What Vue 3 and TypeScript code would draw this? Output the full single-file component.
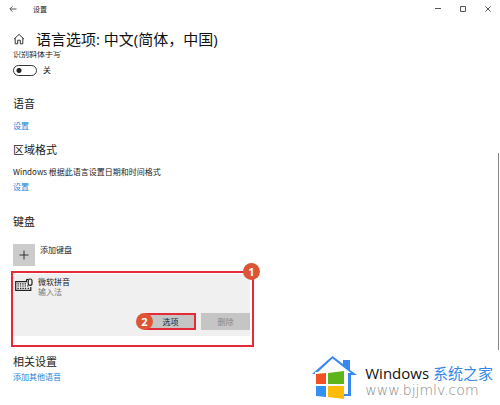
<script setup lang="ts">
import { ref } from 'vue'

const handwriting = ref(false)
const title: string = '语言选项: 中文(简体，中国)'
</script>

<template>
  <div class="window">
    <header class="titlebar">
      <button class="bar-btn back" aria-label="返回">
        <svg width="8" height="8" viewBox="0 0 8 8"><path d="M7.5 4H1M3.5 1.3L.8 4l2.7 2.7" /></svg>
      </button>
      <span class="app-name">设置</span>
      <button class="bar-btn" aria-label="最小化">
        <svg width="6" height="6" viewBox="0 0 6 6"><path d="M0 2.5h6" /></svg>
      </button>
      <button class="bar-btn" aria-label="最大化">
        <svg width="6" height="6" viewBox="0 0 6 6"><path d="M.5 .5h5v5h-5z" /></svg>
      </button>
      <button class="bar-btn" aria-label="关闭">
        <svg width="6" height="6" viewBox="0 0 6 6"><path d="M.4 .4l5.2 5.2M5.6 .4L.4 5.6" /></svg>
      </button>
    </header>

    <div class="page-head">
      <svg class="home" width="12" height="12" viewBox="0 0 12 12">
        <path d="M1 6.2L6 1.4l5 4.8M2.2 5.2v5.6h2.5V7.2h2.6v3.6h2.5V5.2" />
      </svg>
      <h1>{{ title }}</h1>
    </div>

    <main class="content">
      <div class="clip"><span id="hand-label">识别斜体手写</span></div>
      <label class="toggle">
        <input v-model="handwriting" type="checkbox" role="switch" aria-labelledby="hand-label" />
        <span>{{ handwriting ? '开' : '关' }}</span>
      </label>

      <section class="speech">
        <h2>语音</h2>
        <a href="#speech">设置</a>
      </section>

      <section class="region">
        <h2>区域格式</h2>
        <p>Windows 根据此语言设置日期和时间格式</p>
        <a href="#region">设置</a>
      </section>

      <section class="keyboards">
        <h2>键盘</h2>
        <button class="add">
          <span class="tile">
            <svg width="10" height="10" viewBox="0 0 10 10"><path d="M5 .5v9M.5 5h9" /></svg>
          </span>
          <span>添加键盘</span>
        </button>
        <div class="card">
          <div class="ime">
            <svg width="18" height="14" viewBox="0 0 18 14">
              <path class="line" d="M12 3.6H.7v8.7h15.1V9" />
              <path class="keys" d="M2.4 5.9h9.5M2.4 8h11.5M2.4 10.3h1.4M5 10.3h6.5M12.7 10.3h1.4" />
              <rect class="line" x="13.2" y="1" width="3.8" height="6.4" rx="1.9" />
              <path class="line" d="M13.2 1.6Q11.4 .6 11.4 3" />
            </svg>
            <div>
              <div>微软拼音</div>
              <div class="kind">输入法</div>
            </div>
          </div>
          <div class="actions">
            <div class="marked">
              <button class="action">选项</button>
              <span class="step step-two">2</span>
            </div>
            <button class="action" disabled>删除</button>
          </div>
          <div class="frame"><span class="step step-one">1</span></div>
        </div>
      </section>

      <section class="related">
        <h2>相关设置</h2>
        <a href="#add-language">添加其他语音</a>
      </section>
    </main>

    <div class="scrollbar"></div>

    <div class="watermark">
      <svg width="46" height="46" viewBox="0 0 46 46">
        <path fill="#3889ee" d="M0 18L20.500 0 31 8V4h7v10l7 5h-6v21H28v-2h8V17h3L20.500 2.500 6 16H3v2z" />
        <path fill="#f05123" d="M4 18l10-1v11H4z" />
        <path fill="#5db51a" d="M16 17l16-2v13H16z" />
        <path fill="#338ff0" d="M4 30h10v11L4 40z" />
        <path fill="#ffbb05" d="M16 30h16v13l-16-2z" />
      </svg>
      <div class="brand">
        <div class="brand-name">Windows <b>系统之家</b></div>
        <div class="brand-url">www.bjjmlv.com</div>
      </div>
    </div>
  </div>
</template>

<style>
body {
  margin: 0;
  background: #fff;
}
</style>

<style scoped>
.window {
  position: relative;
  min-height: 100vh;
  box-sizing: border-box;
  overflow: hidden;
  color: #222;
  font: 8px/12px "Noto Sans CJK SC", sans-serif;
}
button {
  padding: 0;
  border: 0;
  background: none;
  color: inherit;
  font: inherit;
}
h1, h2, p {
  margin: 0;
  font-weight: 400;
}
a {
  display: block;
  width: max-content;
  color: #1683d8;
  text-decoration: none;
}
svg {
  display: block;
  flex: none;
  fill: none;
  stroke: #333;
}
.titlebar {
  display: flex;
  align-items: center;
  height: 18px;
}
.bar-btn {
  display: flex;
  align-items: center;
  justify-content: center;
  width: 25px;
  height: 18px;
}
.bar-btn svg {
  stroke: #555;
  stroke-width: 1;
}
.app-name {
  flex: 1;
  padding-left: 8px;
  font-size: 7px;
}
.page-head {
  display: flex;
  align-items: center;
  gap: 11px;
  height: 24px;
  padding: 9px 13px 0;
}
h1 {
  color: #111;
  font-family: "Open Sans", "Noto Sans CJK SC", sans-serif;
  font-size: 15px;
  line-height: 24px;
}
.content {
  padding: 0 13px;
}
.clip {
  display: flex;
  align-items: flex-end;
  height: 9px;
  overflow: hidden;
}
.toggle {
  display: flex;
  align-items: center;
  gap: 6px;
  width: max-content;
  margin-top: 4px;
}
.toggle input {
  appearance: none;
  width: 24px;
  height: 11px;
  margin: 0;
  border: 1px solid #333;
  border-radius: 6px;
  background: radial-gradient(circle at 5px 50%, #222 2px, transparent 3px);
}
.toggle input:checked {
  background: radial-gradient(circle at 17px 50%, #222 2px, transparent 3px);
}
h2 {
  font-size: 11px;
  line-height: 16px;
}
.speech {
  margin-top: 19px;
}
.speech a {
  margin-top: 9px;
}
.region {
  margin-top: 9px;
}
.region p {
  margin-top: 9px;
}
.region a {
  margin-top: 3px;
}
.keyboards {
  margin-top: 20px;
}
.add {
  display: flex;
  gap: 5px;
  margin-top: 15px;
}
.tile {
  display: grid;
  place-items: center;
  width: 22px;
  height: 22px;
  background: #ccc;
}
.card {
  position: relative;
  max-width: 237px;
  margin-top: 8px;
  padding-bottom: 6px;
  background: #f0f0f0;
}
.ime {
  display: flex;
  gap: 5px;
  padding: 3px 2px;
  line-height: 10px;
}
.ime svg {
  margin-top: 1px;
}
.line {
  stroke: #222;
  stroke-width: 1.2;
}
.keys {
  stroke: #222;
  stroke-width: 1.2;
  stroke-dasharray: 1.4 1;
}
.kind {
  color: #777;
}
.actions {
  display: flex;
  justify-content: flex-end;
  gap: 5px;
  padding-top: 13px;
}
.action {
  display: block;
  width: 49px;
  height: 17px;
  background: #c5c5c5;
}
.action:disabled {
  color: #888;
}
.marked {
  position: relative;
}
.marked .action {
  width: 51px;
  border: 2px solid #e52b38;
}
.frame {
  position: absolute;
  inset: -3px -4px -11px -2px;
  border: 2px solid #e52b38;
  pointer-events: none;
}
.step {
  position: absolute;
  display: grid;
  place-items: center;
  width: 17px;
  height: 17px;
  border-radius: 50%;
  background: #dc5635;
  color: #fff;
  font: 700 11px/17px "Open Sans", sans-serif;
}
.step-one {
  top: -10px;
  right: -8px;
}
.step-two {
  top: 0;
  left: -9px;
}
.related {
  margin-top: 17px;
}
.related a {
  margin-top: 2px;
}
.scrollbar {
  position: absolute;
  top: 153px;
  right: 1px;
  bottom: 55px;
  width: 1px;
  background: #858585;
}
.watermark {
  position: absolute;
  right: 7px;
  bottom: 3px;
  display: flex;
  gap: 7px;
}
.watermark svg {
  stroke: none;
}
.brand {
  padding-top: 8px;
  white-space: nowrap;
}
.brand-name {
  color: #111;
  font-family: "Open Sans", "Noto Sans CJK SC", sans-serif;
  font-size: 15px;
  line-height: 18px;
}
.brand-name b {
  color: #3488e8;
  font-weight: 400;
}
.brand-url {
  color: #888;
  font: 200 14px/16px "DejaVu Sans Light", "DejaVu Sans", sans-serif;
}
</style>
